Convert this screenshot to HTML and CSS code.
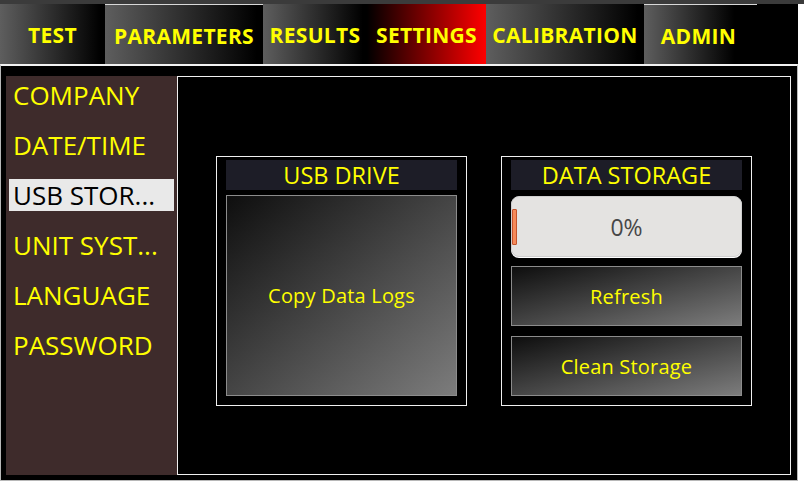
FILE: index.html
```html
<!DOCTYPE html>
<html lang="en">

<head>
    <meta charset="UTF-8">
    <meta name="viewport" content="width=device-width, initial-scale=1.0">
    <title>Settings - USB Storage</title>
    <link rel="stylesheet" href="styles.css">
</head>

<body>
    <div class="window">
        <div class="title-strip"></div>

        <nav class="tabs">
            <div class="tab">TEST</div>
            <div class="tab tab-top">PARAMETERS</div>
            <div class="tab">RESULTS</div>
            <div class="tab active">SETTINGS</div>
            <div class="tab">CALIBRATION</div>
            <div class="tab tab-top tab-short">ADMIN</div>
            <div class="tab-fill"></div>
        </nav>

        <div class="main">
            <ul class="side-menu">
                <li>COMPANY</li>
                <li>DATE/TIME</li>
                <li class="selected">USB STOR...</li>
                <li>UNIT SYST...</li>
                <li>LANGUAGE</li>
                <li>PASSWORD</li>
            </ul>

            <div class="content">
                <div class="group">
                    <div class="group-title">USB DRIVE</div>
                    <button class="action copy-btn">Copy Data Logs</button>
                </div>

                <div class="group">
                    <div class="group-title">DATA STORAGE</div>
                    <div class="progress">
                        <span class="chunk"></span>
                        <span class="progress-label">0%</span>
                    </div>
                    <button class="action refresh-btn">Refresh</button>
                    <button class="action clean-btn">Clean Storage</button>
                </div>
            </div>
        </div>
    </div>
</body>

</html>
```

FILE: styles.css
```css
body {
    margin: 0;
    background: #fff;
    font-family: 'Open Sans', 'Noto Sans', sans-serif;
}

.window {
    width: 798px;
}

.title-strip {
    height: 4px;
    width: 804px;
    background: #3b3b3b;
}

.tabs {
    display: grid;
    grid-template-columns: 105px 158px 104px 119px 158px 113px 1fr;
    height: 60px;
    background: #000;
}

.tab {
    display: flex;
    align-items: center;
    justify-content: center;
    padding-top: 2px;
    color: #ffff00;
    font-weight: bold;
    font-size: 21px;
    letter-spacing: 0.3px;
    background: linear-gradient(to right, #5e5e5e, #000 96%);
}

.tab-top {
    border-top: 1px solid #d8d8d8;
}

.tab-short {
    padding-right: 4px;
    background: linear-gradient(to right, #5e5e5e, #000 80%);
}

.tab.active {
    background: linear-gradient(to right, #000, #ff0000);
}

.main {
    display: flex;
    height: 417px;
    box-sizing: border-box;
    padding: 10px 6px 5px 5px;
    background: #000;
    border: 1px solid #b8b8b8;
    border-top: 2px solid #f2f2f2;
}

.side-menu {
    list-style: none;
    margin: 0;
    padding: 3px 0 0;
    width: 171px;
    background: #3e2b2b;
}

.side-menu li {
    height: 32px;
    line-height: 32px;
    margin: 0 3px 18px;
    padding-left: 4px;
    font-size: 26px;
    color: #ffff00;
    white-space: nowrap;
}

.side-menu li.selected {
    background: #e9e9e9;
    color: #000;
}

.content {
    flex: 1;
    display: flex;
    justify-content: center;
    align-items: flex-start;
    gap: 34px;
    padding-top: 79px;
    border: 1px solid #f0f0f0;
}

.group {
    display: flex;
    flex-direction: column;
    width: 251px;
    box-sizing: border-box;
    padding: 3px 9px 9px;
    border: 1px solid #f0f0f0;
}

.group-title {
    height: 30px;
    line-height: 30px;
    text-align: center;
    background: #1d1d27;
    color: #ffff00;
    font-size: 23.5px;
}

.action {
    padding: 0;
    border: 1px solid #8c8c8c;
    background: linear-gradient(to bottom right, #0e0e0e, #7c7c7c);
    color: #ffff00;
    font-family: 'Open Sans', 'Noto Sans', sans-serif;
    font-size: 20px;
    letter-spacing: 0.2px;
    cursor: pointer;
}

.copy-btn {
    height: 201px;
    margin-top: 5px;
}

.refresh-btn {
    height: 60px;
    margin-top: 9px;
}

.clean-btn {
    height: 60px;
    margin-top: 10px;
}

.progress {
    position: relative;
    display: flex;
    align-items: center;
    justify-content: center;
    height: 61px;
    margin-top: 6px;
    box-sizing: border-box;
    background: #e4e3e1;
    border: 1px solid #cfcfcf;
    border-radius: 8px;
    box-shadow: 0 1px 0 #fff;
}

.chunk {
    position: absolute;
    left: 0;
    top: 12px;
    width: 3px;
    height: 34px;
    background: #f58a5a;
    border: 1px solid #c4542c;
    border-radius: 1px;
}

.progress-label {
    font-size: 23px;
    color: #474747;
}
```
